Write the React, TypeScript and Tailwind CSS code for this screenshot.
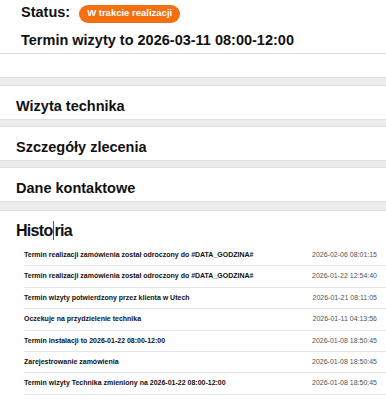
const sections = ['Wizyta technika', 'Szczegóły zlecenia', 'Dane kontaktowe'];

const history = [
  { text: 'Termin realizacji zamówienia został odroczony do #DATA_GODZINA#', date: '2026-02-06 08:01:15' },
  { text: 'Termin realizacji zamówienia został odroczony do #DATA_GODZINA#', date: '2026-01-22 12:54:40' },
  { text: 'Termin wizyty potwierdzony przez klienta w Utech', date: '2026-01-21 08:11:05' },
  { text: 'Oczekuje na przydzielenie technika', date: '2026-01-11 04:13:56' },
  { text: 'Termin instalacji to 2026-01-22 08:00-12:00', date: '2026-01-08 18:50:45' },
  { text: 'Zarejestrowanie zamówienia', date: '2026-01-08 18:50:45' },
  { text: 'Termin wizyty Technika zmieniony na 2026-01-22 08:00-12:00', date: '2026-01-08 18:50:45' },
];

function Band({ h }: { h: string }) {
  return <div className={`${h} bg-[#ececec] border-y border-[#e0e0e0]`} />;
}

export default function App() {
  return (
    <div className="w-[386px] h-[400px] overflow-hidden bg-white text-[#111] font-['Liberation_Sans',Arial,sans-serif]">
      {/* Header */}
      <div className="px-[21px] pt-[4px] pb-[3px] border-b border-[#dddddd]">
        <div className="flex items-center gap-[9px] h-[19px]">
          <span className="text-[14.5px] font-bold leading-none -mt-[2px]">Status:</span>
          <span className="h-[18px] px-[8px] flex items-center rounded-full bg-[#f2700f] text-white text-[9.5px] font-bold">
            W trakcie realizacji
          </span>
        </div>
        <h1 className="mt-[7px] text-[14.5px] font-bold leading-[20px]">Termin wizyty to 2026-03-11 08:00-12:00</h1>
      </div>
      <div className="h-[23px]" />

      {sections.map((s, i) => (
        <div key={s}>
          <Band h={i === 0 ? 'h-[9px]' : 'h-[8px]'} />
          <div className="h-[33px] flex items-center px-[16px] pt-[9px]">
            <h2 className="text-[14.5px] font-bold">{s}</h2>
          </div>
        </div>
      ))}
      <Band h="h-[10px]" />

      {/* Historia */}
      <div className="pl-[16px] pt-[8px] pb-[2px] leading-[24px] text-[16px] font-bold tracking-[-0.7px] text-[#111]">
        Histo<span className="inline-block w-px h-[19px] bg-[#555] align-middle -mt-[3px] mx-[0.5px]" />ria
      </div>
      <div className="pl-[24px]">
        {history.map((h, i) => (
          <div key={i} className="h-[21.4px] flex items-center justify-between pr-[9px] border-b border-[#e6e6e6]">
            <span className="text-[7px] font-bold text-[#111]">{h.text}</span>
            <span className="text-[7px] text-[#555]">{h.date}</span>
          </div>
        ))}
      </div>
    </div>
  );
}
